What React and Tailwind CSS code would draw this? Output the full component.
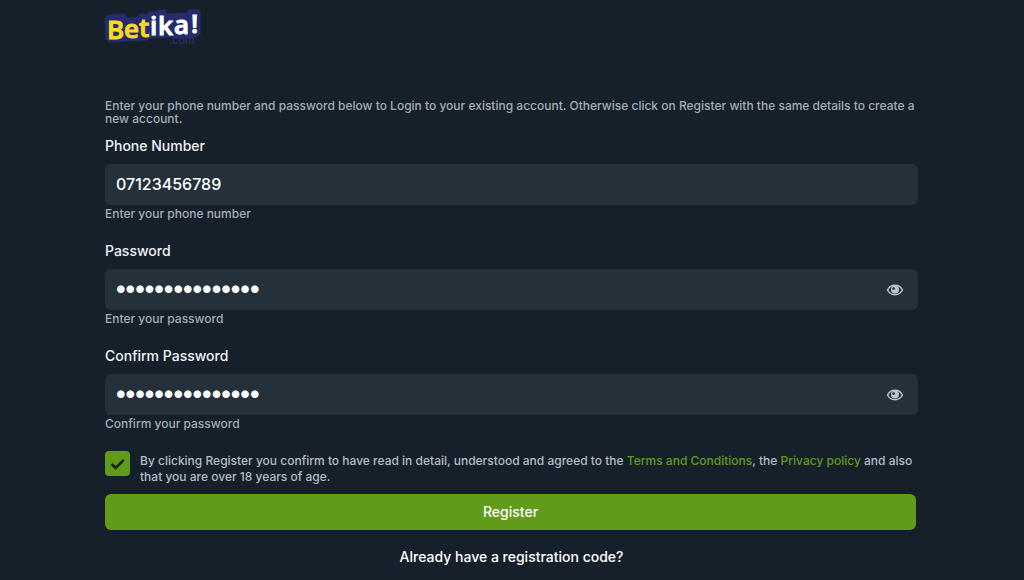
import { useState } from "react";

const letters = [
  { char: "B", x: 2, y: 30, fill: "#fbd72b" },
  { char: "e", x: 19, y: 29, fill: "#fbd72b" },
  { char: "t", x: 34, y: 28, fill: "#fbd72b" },
  { char: "i", x: 45, y: 26, fill: "#ffffff" },
  { char: "k", x: 53, y: 26, fill: "#ffffff" },
  { char: "a", x: 69, y: 25, fill: "#ffffff" },
  { char: "!", x: 86, y: 24, fill: "#ffffff" },
];

const Logo = () => (
  <svg width="98" height="38" viewBox="0 0 98 38" role="img" aria-label="Betika.com" className="overflow-visible">
    <path
      d="M3 6L20 5L22 9L33 8L35 5L43 5L44 3L51 3L53 1L60 1L62 5L82 4L84 1L95 1L95 25L91 28L64 28L44 29L42 31L4 33L1 30L0 9Z"
      fill="#242c6c"
      stroke="#242c6c"
      strokeWidth="1"
      strokeLinejoin="round"
    />
    <g fontFamily="'Open Sans', sans-serif" fontWeight="600" fontSize="26">
      {letters.map((l) => (
        <text key={l.char} x={l.x} y={l.y} fill={l.fill} stroke={l.fill} strokeWidth="1">
          {l.char}
        </text>
      ))}
    </g>
    <text x="64" y="35" fill="#2d367c" fontFamily="Inter, sans-serif" fontSize="11">.com</text>
  </svg>
);

const EyeIcon = () => (
  <svg width="18" height="14" viewBox="0 0 18 14" fill="none" aria-hidden="true">
    <path d="M1.500 7C3 4 5.700 2.300 9 2.300S15 4 16.500 7C15 10 12.300 11.700 9 11.700S3 10 1.500 7Z" stroke="#b9c3cc" strokeWidth="1.500" />
    <circle cx="9" cy="6.500" r="4" fill="#b9c3cc" />
    <circle cx="7.600" cy="5.600" r="1.300" fill="#24313b" />
  </svg>
);

function Field({ id, label, hint, type, value, onChange }) {
  const [visible, setVisible] = useState(false);
  const isPassword = type === "password";
  const masked = isPassword && !visible;

  return (
    <div className="mb-5">
      <label htmlFor={id} className="mb-2 block text-sm leading-5 font-medium text-[#f1f4f6]">
        {label}
      </label>
      <div className="flex h-[41px] items-center rounded-md bg-[#24313b]">
        <input
          id={id}
          type={isPassword && visible ? "text" : type}
          value={value}
          onChange={(e) => onChange(e.target.value)}
          className={`h-full min-w-0 flex-1 bg-transparent px-[11px] text-white outline-none ${masked ? "pb-1 text-2xl font-black" : "pb-0.5 text-base font-medium"}`}
        />
        {isPassword && (
          <button
            type="button"
            aria-label="Show password"
            onClick={() => setVisible(!visible)}
            className="mr-[14px]"
          >
            <EyeIcon />
          </button>
        )}
      </div>
      <p className="mt-0.5 text-xs leading-[14px] font-medium text-[#a5aeb5]">{hint}</p>
    </div>
  );
}

export default function App() {
  const [phone, setPhone] = useState("07123456789");
  const [password, setPassword] = useState("secretpass12345");
  const [confirm, setConfirm] = useState("secretpass12345");
  const [agreed, setAgreed] = useState(true);

  return (
    <main className="min-h-screen bg-[#16202b] pr-[106px] pl-[105px] pt-[9px] font-['Inter',sans-serif]">
      <Logo />

      <form onSubmit={(e) => e.preventDefault()} className="pt-[52px]">
        <p className="mb-[11px] text-xs leading-[13px] font-medium text-[#a5aeb5]">
          Enter your phone number and password below to Login to your existing account. Otherwise
          click on Register with the same details to create a new account.
        </p>

        <Field id="phone" label="Phone Number" hint="Enter your phone number" type="text" value={phone} onChange={setPhone} />
        <Field id="password" label="Password" hint="Enter your password" type="password" value={password} onChange={setPassword} />
        <Field id="confirm" label="Confirm Password" hint="Confirm your password" type="password" value={confirm} onChange={setConfirm} />

        <div className="mr-0.5">
          <div className="flex gap-[10px]">
            <span className="relative h-[25px] w-[25px] shrink-0">
              <input
                id="terms"
                type="checkbox"
                checked={agreed}
                onChange={(e) => setAgreed(e.target.checked)}
                className="block h-full w-full appearance-none rounded-sm bg-[#24313b] checked:bg-[#609b19]"
              />
              {agreed && (
                <svg width="25" height="25" viewBox="0 0 25 25" fill="none" className="pointer-events-none absolute inset-0">
                  <path d="M6.500 13L10.700 17L18.800 8.800" stroke="#132313" strokeWidth="2.600" />
                </svg>
              )}
            </span>
            <label htmlFor="terms" className="pt-0.5 text-xs leading-4 font-medium text-[#b4bcc3]">
              By clicking Register you confirm to have read in detail, understood and agreed to the{" "}
              <a href="#terms" className="text-[#609b19]">Terms and Conditions</a>, the{" "}
              <a href="#privacy" className="text-[#609b19]">Privacy policy</a> and also that you are
              over 18 years of age.
            </label>
          </div>

          <button type="submit" className="mt-[9px] block h-9 w-full rounded-md bg-[#609b19] text-sm font-medium text-white">
            Register
          </button>
        </div>
        <a href="#code" className="mt-[17px] block text-center text-sm leading-5 font-medium text-white">
          Already have a registration code?
        </a>
      </form>
    </main>
  );
}
